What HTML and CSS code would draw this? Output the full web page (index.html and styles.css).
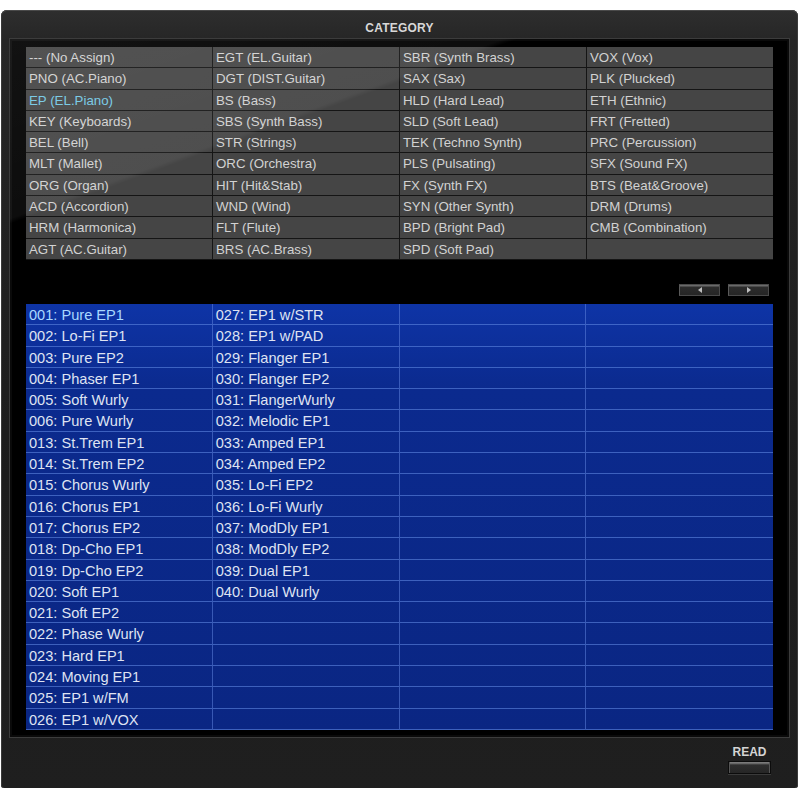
FILE: index.html
```html
<!DOCTYPE html>
<html>
<head>
<meta charset="utf-8">
<link rel="stylesheet" href="styles.css">
</head>
<body>
<div class="frame">
  <div class="title">CATEGORY</div>
  <div class="panel">
    <div class="sheen"></div>
    <div class="cats">
      <div class="cell">--- (No Assign)</div><div class="cell">EGT (EL.Guitar)</div><div class="cell">SBR (Synth Brass)</div><div class="cell">VOX (Vox)</div>
      <div class="cell">PNO (AC.Piano)</div><div class="cell">DGT (DIST.Guitar)</div><div class="cell">SAX (Sax)</div><div class="cell">PLK (Plucked)</div>
      <div class="cell sel">EP (EL.Piano)</div><div class="cell">BS (Bass)</div><div class="cell">HLD (Hard Lead)</div><div class="cell">ETH (Ethnic)</div>
      <div class="cell">KEY (Keyboards)</div><div class="cell">SBS (Synth Bass)</div><div class="cell">SLD (Soft Lead)</div><div class="cell">FRT (Fretted)</div>
      <div class="cell">BEL (Bell)</div><div class="cell">STR (Strings)</div><div class="cell">TEK (Techno Synth)</div><div class="cell">PRC (Percussion)</div>
      <div class="cell">MLT (Mallet)</div><div class="cell">ORC (Orchestra)</div><div class="cell">PLS (Pulsating)</div><div class="cell">SFX (Sound FX)</div>
      <div class="cell">ORG (Organ)</div><div class="cell">HIT (Hit&amp;Stab)</div><div class="cell">FX (Synth FX)</div><div class="cell">BTS (Beat&amp;Groove)</div>
      <div class="cell">ACD (Accordion)</div><div class="cell">WND (Wind)</div><div class="cell">SYN (Other Synth)</div><div class="cell">DRM (Drums)</div>
      <div class="cell">HRM (Harmonica)</div><div class="cell">FLT (Flute)</div><div class="cell">BPD (Bright Pad)</div><div class="cell">CMB (Combination)</div>
      <div class="cell">AGT (AC.Guitar)</div><div class="cell">BRS (AC.Brass)</div><div class="cell">SPD (Soft Pad)</div><div class="cell"></div>
    </div>
    <div class="nav">
      <div class="navbtn"><span class="tri left"></span></div>
      <div class="navbtn"><span class="tri right"></span></div>
    </div>
    <div class="list" id="list"></div>
  </div>
  <div class="footer">
    <div class="read">
      <div class="readlabel">READ</div>
      <div class="readbtn"></div>
    </div>
  </div>
</div>
<script>
var c1 = ["001: Pure EP1","002: Lo-Fi EP1","003: Pure EP2","004: Phaser EP1","005: Soft Wurly","006: Pure Wurly","013: St.Trem EP1","014: St.Trem EP2","015: Chorus Wurly","016: Chorus EP1","017: Chorus EP2","018: Dp-Cho EP1","019: Dp-Cho EP2","020: Soft EP1","021: Soft EP2","022: Phase Wurly","023: Hard EP1","024: Moving EP1","025: EP1 w/FM","026: EP1 w/VOX"];
var c2 = ["027: EP1 w/STR","028: EP1 w/PAD","029: Flanger EP1","030: Flanger EP2","031: FlangerWurly","032: Melodic EP1","033: Amped EP1","034: Amped EP2","035: Lo-Fi EP2","036: Lo-Fi Wurly","037: ModDly EP1","038: ModDly EP2","039: Dual EP1","040: Dual Wurly"];
var list = document.getElementById("list");
for (var r = 0; r < 20; r++) {
  var cols = [c1[r] || "", c2[r] || "", "", ""];
  for (var c = 0; c < 4; c++) {
    var d = document.createElement("div");
    d.className = "item" + (r === 0 && c === 0 ? " sel" : "") + (c === 3 ? " last" : "");
    d.textContent = cols[c];
    list.appendChild(d);
  }
}
</script>
</body>
</html>
```
FILE: styles.css
```css
html, body {
  margin: 0;
  padding: 0;
  background: #ffffff;
}
body {
  font-family: "Liberation Sans", Arial, sans-serif;
}
.frame {
  margin: 10px 2px 0 1px;
  height: 778px;
  border-radius: 6px 6px 3px 3px;
  background: linear-gradient(180deg, #2e2e2e 0px, #262626 30px, #1c1c1c 60%, #1f1f1f 100%);
  box-shadow: inset 0 1px 0 #4a4a4a, inset 1px 0 0 #3a3a3a, inset -1px 0 0 #3a3a3a;
  display: flex;
  flex-direction: column;
}
.title {
  height: 28px;
  line-height: 37px;
  text-align: center;
  color: #d8d8d8;
  font-weight: bold;
  font-size: 12px;
  letter-spacing: 0.2px;
}
.panel {
  position: relative;
  margin: 0 8px;
  background: #000;
  border: 1px solid #3c3c3c;
  box-shadow: inset 0 0 0 2px #0a0a0a;
  padding: 8px 16px 7px 16px;
  height: 683px;
}
.sheen {
  position: absolute;
  left: 0; top: 0; right: 0; height: 230px;
  background: linear-gradient(160deg, rgba(255,255,255,0.07) 0%, rgba(255,255,255,0.05) 35%, rgba(255,255,255,0) 36%);
  pointer-events: none;
  z-index: 2;
}
.cats {
  display: grid;
  grid-template-columns: repeat(4, 1fr);
  grid-template-rows: repeat(10, 20.3px);
  gap: 1px;
  background: #151515;
  border-bottom: 1px solid #151515;
}
.cell {
  background: #454545;
  color: #d2d2d2;
  font-size: 13.3px;
  line-height: 22px;
  padding-left: 3px;
  white-space: nowrap;
  overflow: hidden;
}
.cell.sel {
  color: #74c8e4;
}
.nav {
  height: 44px;
  display: flex;
  justify-content: flex-end;
  align-items: flex-start;
  gap: 8px;
  padding-top: 24px;
  padding-right: 4px;
  box-sizing: border-box;
}
.navbtn {
  width: 41px;
  height: 12px;
  box-sizing: border-box;
  background: linear-gradient(180deg, #6a6a6a 0, #6a6a6a 1px, #2c2c2c 2px, #262626 100%);
  border: 1px solid #4a4a4a;
  border-left-color: #5a5a5a;
  display: flex;
  align-items: center;
  justify-content: center;
}
.tri {
  width: 0; height: 0;
  border-top: 3px solid transparent;
  border-bottom: 3px solid transparent;
  margin-top: 1px;
}
.tri.left { border-right: 4px solid #bfbfbf; }
.tri.right { border-left: 4px solid #bfbfbf; }
.list {
  display: grid;
  grid-template-columns: repeat(4, 1fr);
  grid-template-rows: repeat(20, 21.3px);
  background: linear-gradient(180deg, #0e34a6 0%, #0b2a8e 20%, #0a2683 100%);
}
.item {
  box-sizing: border-box;
  border-right: 1px solid rgba(95,130,220,0.55);
  border-bottom: 1px solid rgba(95,135,225,0.6);
  color: #dfe3f2;
  font-size: 14.6px;
  line-height: 23px;
  padding-left: 3px;
  white-space: nowrap;
  overflow: hidden;
}
.item.last { border-right: none; }
.item.sel { color: #a9d9ff; }
.footer {
  flex: 1;
  display: flex;
  justify-content: flex-end;
  padding-right: 27px;
  padding-top: 7px;
}
.read {
  display: flex;
  flex-direction: column;
  align-items: center;
  gap: 2px;
}
.readlabel {
  color: #d4d4d4;
  font-weight: bold;
  font-size: 12px;
  line-height: 14px;
}
.readbtn {
  width: 43px;
  height: 13px;
  box-sizing: border-box;
  border: 1px solid #0c0c0c;
  background: linear-gradient(180deg, #7a7a7a 0, #7a7a7a 1px, #2e2e2e 3px, #262626 100%);
  box-shadow: inset 1px 0 0 #555, inset -1px 0 0 #555, 0 1px 0 #3a3a3a;
}
```
